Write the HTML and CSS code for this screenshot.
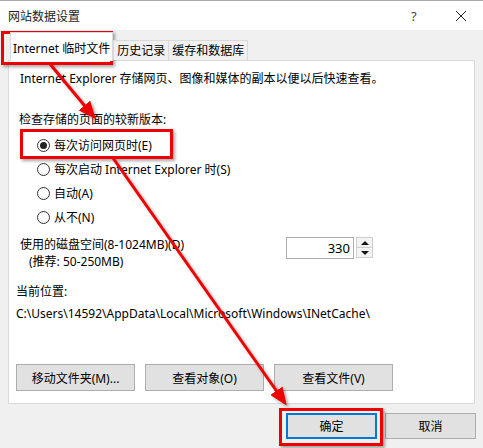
FILE: index.html
```html
<!DOCTYPE html>
<html lang="zh-CN">
<head>
    <meta charset="UTF-8">
    <title>网站数据设置</title>
    <link rel="stylesheet" href="styles.css">
</head>
<body>
    <div class="dialog">
        <div class="titlebar">
            <span class="title">网站数据设置</span>
            <span class="help">?</span>
            <span class="close">
                <svg width="12" height="12" viewBox="0 0 12 12"><path d="M1 1 L11 11 M11 1 L1 11" stroke="#222" stroke-width="1"/></svg>
            </span>
        </div>

        <div class="tabs">
            <div class="tab active">Internet 临时文件</div>
            <div class="tab">历史记录</div>
            <div class="tab">缓存和数据库</div>
        </div>

        <div class="panel">
            <p class="desc">Internet Explorer 存储网页、图像和媒体的副本以便以后快速查看。</p>

            <p class="group-label">检查存储的页面的较新版本:</p>
            <div class="radios">
                <div class="radio checked"><span class="dot"></span>每次访问网页时(E)</div>
                <div class="radio"><span class="dot"></span>每次启动 Internet Explorer 时(S)</div>
                <div class="radio"><span class="dot"></span>自动(A)</div>
                <div class="radio"><span class="dot"></span>从不(N)</div>
            </div>

            <div class="disk-row">
                <div class="disk-label">
                    <div>使用的磁盘空间(8-1024MB)(D)</div>
                    <div class="hint">(推荐: 50-250MB)</div>
                </div>
                <div class="spin">
                    <div class="spin-value">330</div>
                    <div class="spin-btns">
                        <div class="spin-btn"><span class="up"></span></div>
                        <div class="spin-btn"><span class="down"></span></div>
                    </div>
                </div>
            </div>

            <p class="loc-label">当前位置:</p>
            <p class="loc-path">C:\Users\14592\AppData\Local\Microsoft\Windows\INetCache\</p>

            <div class="panel-buttons">
                <button class="btn">移动文件夹(M)...</button>
                <button class="btn">查看对象(O)</button>
                <button class="btn">查看文件(V)</button>
            </div>
        </div>

        <div class="footer">
            <button class="btn btn-ok">确定</button>
            <button class="btn btn-cancel">取消</button>
        </div>
    </div>

    <!-- annotation overlay -->
    <div class="mark mark-tab"></div>
    <div class="mark mark-radio"></div>
    <div class="mark mark-ok"></div>
    <svg class="arrows" width="483" height="448" viewBox="0 0 483 448">
        <defs>
            <filter id="shadow" x="-20%" y="-20%" width="140%" height="140%">
                <feDropShadow dx="2" dy="2" stdDeviation="1.5" flood-color="#000" flood-opacity="0.35"/>
            </filter>
            <marker id="head" markerWidth="6" markerHeight="5" refX="5" refY="2.5" orient="auto" markerUnits="strokeWidth">
                <path d="M0 0 L6 2.5 L0 5 Z" fill="#ee0000"/>
            </marker>
        </defs>
        <g filter="url(#shadow)" stroke="#ee0000" stroke-width="3" fill="none">
            <line x1="50" y1="64" x2="94" y2="117" marker-end="url(#head)"/>
            <line x1="113" y1="158" x2="285" y2="403" marker-end="url(#head)"/>
        </g>
    </svg>
</body>
</html>
```

FILE: styles.css
```css
* {
    margin: 0;
    padding: 0;
    box-sizing: border-box;
}

body {
    width: 483px;
    height: 448px;
    overflow: hidden;
    position: relative;
    background: #f0f0f0;
    font-family: "Noto Sans", "Noto Sans CJK SC", sans-serif;
    font-size: 12px;
    color: #000;
}

.dialog {
    height: 448px;
}

.titlebar {
    height: 30px;
    border-top: 1px solid #a8a8a8;
    background: #fff;
    display: flex;
    align-items: center;
    padding-left: 8px;
}

.title {
    flex: 1;
    color: #222;
}

.help {
    width: 14px;
    margin-right: 30px;
    font-size: 13px;
    color: #444;
}

.close {
    width: 12px;
    margin-right: 16px;
    display: flex;
}

.tabs {
    display: flex;
    align-items: flex-end;
    height: 30px;
    padding-left: 10px;
    position: relative;
    z-index: 1;
}

.tab {
    height: 20px;
    line-height: 19px;
    padding: 0 3px;
    background: #f0f0f0;
    border: 1px solid #d9d9d9;
    border-bottom: none;
    margin-left: -1px;
}

.tab.active {
    height: 29px;
    line-height: 32px;
    padding: 0 2px;
    margin-left: 0;
    margin-right: 1px;
    margin-bottom: -1px;
    background: #fff;
}

.panel {
    margin: 0 8px;
    height: 344px;
    background: #fff;
    border: 1px solid #d9d9d9;
    padding: 10px 0 0 11px;
    display: flex;
    flex-direction: column;
}

.desc {
    line-height: 16px;
}

.group-label {
    margin-top: 25px;
    margin-left: -1px;
    line-height: 16px;
}

.radios {
    margin-top: 5px;
    display: flex;
    flex-direction: column;
}

.radio {
    height: 24px;
    display: flex;
    align-items: center;
    padding-left: 17px;
}

.dot {
    width: 13px;
    height: 13px;
    border: 1px solid #333;
    border-radius: 50%;
    margin-right: 4px;
    display: flex;
    align-items: center;
    justify-content: center;
}

.radio.checked .dot::after {
    content: "";
    width: 7px;
    height: 7px;
    border-radius: 50%;
    background: #222;
}

.disk-row {
    margin-top: 7px;
    display: flex;
    align-items: flex-start;
}

.disk-label {
    line-height: 17px;
    width: 266px;
}

.hint {
    padding-left: 9px;
}

.spin {
    display: flex;
    align-items: flex-start;
    margin-top: 1px;
}

.spin-value {
    width: 68px;
    height: 22px;
    border: 1px solid #acacac;
    text-align: right;
    padding-right: 3px;
    line-height: 20px;
    font-size: 13px;
}

.spin-btns {
    margin-left: 2px;
    display: flex;
    flex-direction: column;
    width: 17px;
}

.spin-btn {
    height: 11px;
    border: 1px solid #cfcfcf;
    background: #f3f3f3;
    display: flex;
    align-items: center;
    justify-content: center;
}

.spin-btn + .spin-btn {
    margin-top: -1px;
}

.up {
    border-left: 4px solid transparent;
    border-right: 4px solid transparent;
    border-bottom: 4px solid #111;
}

.down {
    border-left: 4px solid transparent;
    border-right: 4px solid transparent;
    border-top: 4px solid #111;
}

.loc-label {
    margin-top: 14px;
    margin-left: -4px;
    line-height: 16px;
}

.loc-path {
    margin-top: 6px;
    margin-left: -4px;
    line-height: 16px;
}

.panel-buttons {
    margin-top: 42px;
    margin-left: -4px;
    display: flex;
    gap: 10px;
}

.btn {
    width: 119px;
    height: 27px;
    background: #e1e1e1;
    border: 1px solid #adadad;
    font-family: inherit;
    font-size: 12px;
    color: #000;
}

.footer {
    display: flex;
    justify-content: flex-end;
    gap: 8px;
    padding: 9px 7px 0 0;
}

.btn-ok,
.btn-cancel {
    width: 91px;
    height: 26px;
}

.btn-ok {
    border: 2px solid #0078d7;
}

/* annotations */
.mark {
    position: absolute;
    border: 3px solid #ee0000;
    box-shadow: 2px 2px 3px rgba(0, 0, 0, 0.35);
}

.mark-tab {
    left: 1px;
    top: 31px;
    width: 112px;
    height: 34px;
}

.mark-radio {
    left: 20px;
    top: 129px;
    width: 153px;
    height: 30px;
}

.mark-ok {
    left: 279px;
    top: 408px;
    width: 104px;
    height: 38px;
}

.arrows {
    position: absolute;
    left: 0;
    top: 0;
    pointer-events: none;
}
```
